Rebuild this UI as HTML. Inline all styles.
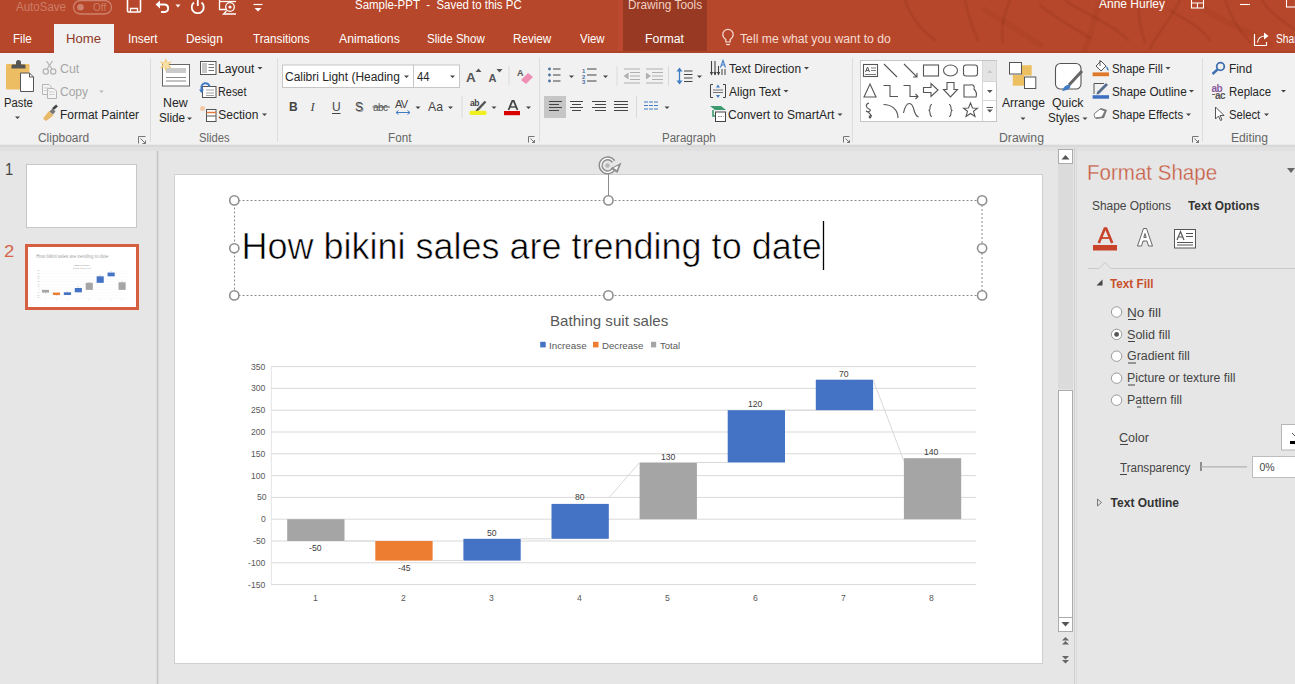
<!DOCTYPE html>
<html><head><meta charset="utf-8">
<style>
*{margin:0;padding:0;box-sizing:border-box}
html,body{width:1295px;height:684px;overflow:hidden;background:#E6E6E6;font-family:"Liberation Sans",sans-serif}
.a{position:absolute}
.t{position:absolute;white-space:nowrap;line-height:1;transform-origin:0 0}
svg{overflow:visible}
.th .t{color:#8C8C8C !important}
</style></head><body>
<!-- ===== title bar ===== -->
<div class="a" style="left:0;top:0;width:1295px;height:53px;background:#B7472A"></div>
<div class="a" style="left:623px;top:0;width:84px;height:53px;background:#983A23"></div>
<div class="a" style="left:618px;top:0;width:5px;height:53px;background:#BE4931"></div>
<div class="a" style="left:0;top:51px;width:1295px;height:2px;background:#AE4328"></div>
<svg class="a" style="left:0;top:0" width="1295" height="53">
<g fill="none" stroke="rgba(110,35,15,0.13)" stroke-width="3" stroke-linecap="round">
  <path d="M905 0 C910 15 918 28 935 40"/>
  <path d="M965 0 C968 14 972 28 978 40"/>
  <path d="M1010 0 C1004 14 1000 28 1003 42"/>
  <path d="M1040 5 C1055 18 1075 28 1090 38"/>
  <path d="M1065 0 C1080 12 1110 22 1128 40"/>
  <path d="M1140 0 C1137 14 1140 28 1145 42"/>
  <path d="M1170 10 C1185 20 1200 26 1210 40"/>
  <path d="M1225 0 C1232 18 1238 30 1250 42"/>
  <path d="M1262 0 C1270 14 1285 22 1295 30"/>
  <path d="M1180 0 C1170 20 1160 30 1150 48"/>
</g>
<g fill="none" stroke="rgba(110,35,15,0.08)" stroke-width="6" stroke-linecap="round">
  <path d="M985 10 C1000 20 1020 30 1040 45"/>
  <path d="M1100 0 C1095 20 1090 35 1085 50"/>
  <path d="M1200 5 C1215 20 1240 25 1270 45"/>
</g>
</svg>

<div class="a" style="left:54px;top:24px;width:60px;height:31px;background:#F1F1F1"></div>
<!-- ===== ribbon ===== -->
<div class="a" style="left:0;top:53px;width:1295px;height:92px;background:#F1F1F1"></div>
<div class="a" style="left:54px;top:51px;width:60px;height:4px;background:#F1F1F1"></div>
<div class="a" style="left:0;top:144px;width:1295px;height:1px;background:#E9E9E9"></div>
<div class="a" style="left:0;top:145px;width:1295px;height:2px;background:#D8D8D8"></div>
<div class="a" style="left:0;top:147px;width:1295px;height:4px;background:#E0E0E0"></div>
<!-- group separators -->
<div class="a" style="left:150px;top:58px;width:1px;height:84px;background:#DCDCDC"></div>
<div class="a" style="left:277px;top:58px;width:1px;height:84px;background:#DCDCDC"></div>
<div class="a" style="left:539px;top:58px;width:1px;height:84px;background:#DCDCDC"></div>
<div class="a" style="left:852px;top:58px;width:1px;height:84px;background:#DCDCDC"></div>
<div class="a" style="left:1202px;top:58px;width:1px;height:84px;background:#DCDCDC"></div>

<!-- ===== left thumbnails panel ===== -->
<div class="a" style="left:156px;top:151px;width:1px;height:533px;background:#DCDCDC"></div>
<div class="a" style="left:157px;top:151px;width:1px;height:533px;background:#C4C4C4"></div>
<div class="a" style="left:158px;top:151px;width:1px;height:533px;background:#DADADA"></div>
<div class="a" style="left:26px;top:164px;width:111px;height:64px;background:#fff;border:1px solid #C6C6C6"></div>
<div class="a" style="left:25px;top:244px;width:114px;height:66px;background:#fff;border:3px solid #D65F40"></div>
<div class="a th" style="left:28px;top:247px;width:108px;height:60px;overflow:hidden">
  <div class="a" style="left:0;top:0;width:1295px;height:684px;transform-origin:0 0;transform:scale(0.1242) translate(-175px,-174px)">
  <svg class="a" style="left:0;top:0" width="1295" height="684" viewBox="0 0 1295 684">
<line x1="271" y1="366.6" x2="976" y2="366.6" stroke="#D9D9D9" stroke-width="1"/>
<line x1="271" y1="388.4" x2="976" y2="388.4" stroke="#D9D9D9" stroke-width="1"/>
<line x1="271" y1="410.2" x2="976" y2="410.2" stroke="#D9D9D9" stroke-width="1"/>
<line x1="271" y1="432.0" x2="976" y2="432.0" stroke="#D9D9D9" stroke-width="1"/>
<line x1="271" y1="453.8" x2="976" y2="453.8" stroke="#D9D9D9" stroke-width="1"/>
<line x1="271" y1="475.6" x2="976" y2="475.6" stroke="#D9D9D9" stroke-width="1"/>
<line x1="271" y1="497.4" x2="976" y2="497.4" stroke="#D9D9D9" stroke-width="1"/>
<line x1="271" y1="519.2" x2="976" y2="519.2" stroke="#D9D9D9" stroke-width="1"/>
<line x1="271" y1="541.0" x2="976" y2="541.0" stroke="#D9D9D9" stroke-width="1"/>
<line x1="271" y1="562.8" x2="976" y2="562.8" stroke="#D9D9D9" stroke-width="1"/>
<line x1="271" y1="584.6" x2="976" y2="584.6" stroke="#D9D9D9" stroke-width="1"/>
<line x1="271.3" y1="366.6" x2="271.3" y2="584.6" stroke="#E4E4E4" stroke-width="1"/>
<rect x="287.2" y="519.2" width="57.3" height="21.8" fill="#A5A5A5"/>
<rect x="375.3" y="541.0" width="57.3" height="19.6" fill="#ED7D31"/>
<rect x="463.4" y="538.8" width="57.3" height="21.8" fill="#4472C4"/>
<rect x="551.5" y="503.9" width="57.3" height="34.9" fill="#4472C4"/>
<rect x="639.6" y="462.5" width="57.3" height="56.7" fill="#A5A5A5"/>
<rect x="727.7" y="410.2" width="57.3" height="52.3" fill="#4472C4"/>
<rect x="815.8" y="379.7" width="57.3" height="30.5" fill="#4472C4"/>
<rect x="903.9" y="458.2" width="57.3" height="61.0" fill="#A5A5A5"/>
<line x1="344.5" y1="541.0" x2="375.3" y2="541.0" stroke="#D9D9D9" stroke-width="1"/>
<line x1="432.6" y1="560.6" x2="463.4" y2="560.6" stroke="#D9D9D9" stroke-width="1"/>
<line x1="520.7" y1="538.8" x2="551.5" y2="538.8" stroke="#D9D9D9" stroke-width="1"/>
<line x1="608.8" y1="497.9" x2="639.6" y2="462.5" stroke="#D9D9D9" stroke-width="1"/>
<line x1="696.9" y1="462.5" x2="727.7" y2="462.5" stroke="#D9D9D9" stroke-width="1"/>
<line x1="785.0" y1="410.2" x2="815.8" y2="410.2" stroke="#D9D9D9" stroke-width="1"/>
<line x1="873.1" y1="379.7" x2="903.9" y2="461.2" stroke="#D9D9D9" stroke-width="1"/>
<rect x="540.2" y="341.8" width="5.5" height="5.6" fill="#4472C4"/>
<rect x="593" y="341.8" width="5.5" height="5.6" fill="#ED7D31"/>
<rect x="651" y="341.8" width="5.2" height="5.6" fill="#A5A5A5"/>
</svg>
<div class="t" style="left:241.40px;top:228.60px;font-size:36px;color:#000;font-weight:normal;-webkit-text-stroke:0.6px #fff;">How bikini sales are trending to date</div>
<div class="t" style="left:549.59px;top:313.15px;font-size:15px;color:#595959;font-weight:normal;transform:scaleX(1.0060);">Bathing suit sales</div>
<div class="t" style="left:548.87px;top:340.73px;font-size:9.5px;color:#595959;font-weight:normal;transform:scaleX(1.0314);">Increase</div>
<div class="t" style="left:602.38px;top:340.73px;font-size:9.5px;color:#595959;font-weight:normal;transform:scaleX(1.0154);">Decrease</div>
<div class="t" style="left:660.40px;top:340.73px;font-size:9.5px;color:#595959;font-weight:normal;transform:scaleX(1.0050);">Total</div>
<div class="t" style="left:251.10px;top:361.64px;font-size:9.6px;color:#595959;font-weight:normal;transform:scaleX(0.9000);">350</div>
<div class="t" style="left:251.10px;top:383.44px;font-size:9.6px;color:#595959;font-weight:normal;transform:scaleX(0.9000);">300</div>
<div class="t" style="left:251.10px;top:405.24px;font-size:9.6px;color:#595959;font-weight:normal;transform:scaleX(0.9000);">250</div>
<div class="t" style="left:251.10px;top:427.04px;font-size:9.6px;color:#595959;font-weight:normal;transform:scaleX(0.9000);">200</div>
<div class="t" style="left:251.10px;top:448.84px;font-size:9.6px;color:#595959;font-weight:normal;transform:scaleX(0.9000);">150</div>
<div class="t" style="left:251.10px;top:470.64px;font-size:9.6px;color:#595959;font-weight:normal;transform:scaleX(0.9000);">100</div>
<div class="t" style="left:256.50px;top:492.44px;font-size:9.6px;color:#595959;font-weight:normal;transform:scaleX(0.9000);">50</div>
<div class="t" style="left:261.00px;top:514.24px;font-size:9.6px;color:#595959;font-weight:normal;transform:scaleX(0.9000);">0</div>
<div class="t" style="left:252.90px;top:536.04px;font-size:9.6px;color:#595959;font-weight:normal;transform:scaleX(0.9000);">-50</div>
<div class="t" style="left:248.40px;top:557.84px;font-size:9.6px;color:#595959;font-weight:normal;transform:scaleX(0.9000);">-100</div>
<div class="t" style="left:248.40px;top:579.64px;font-size:9.6px;color:#595959;font-weight:normal;transform:scaleX(0.9000);">-150</div>
<div class="t" style="left:312.65px;top:592.84px;font-size:9.6px;color:#595959;font-weight:normal;transform:scaleX(0.9000);">1</div>
<div class="t" style="left:400.75px;top:592.84px;font-size:9.6px;color:#595959;font-weight:normal;transform:scaleX(0.9000);">2</div>
<div class="t" style="left:488.85px;top:592.84px;font-size:9.6px;color:#595959;font-weight:normal;transform:scaleX(0.9000);">3</div>
<div class="t" style="left:577.40px;top:592.84px;font-size:9.6px;color:#595959;font-weight:normal;transform:scaleX(0.9000);">4</div>
<div class="t" style="left:665.05px;top:592.84px;font-size:9.6px;color:#595959;font-weight:normal;transform:scaleX(0.9000);">5</div>
<div class="t" style="left:753.15px;top:592.84px;font-size:9.6px;color:#595959;font-weight:normal;transform:scaleX(0.9000);">6</div>
<div class="t" style="left:841.25px;top:592.84px;font-size:9.6px;color:#595959;font-weight:normal;transform:scaleX(0.9000);">7</div>
<div class="t" style="left:929.35px;top:592.84px;font-size:9.6px;color:#595959;font-weight:normal;transform:scaleX(0.9000);">8</div>
<div class="t" style="left:309.25px;top:542.74px;font-size:9.6px;color:#404040;font-weight:normal;transform:scaleX(0.9000);">-50</div>
<div class="t" style="left:397.70px;top:562.74px;font-size:9.6px;color:#404040;font-weight:normal;transform:scaleX(0.9000);">-45</div>
<div class="t" style="left:487.05px;top:527.74px;font-size:9.6px;color:#404040;font-weight:normal;transform:scaleX(0.9000);">50</div>
<div class="t" style="left:575.05px;top:492.34px;font-size:9.6px;color:#404040;font-weight:normal;transform:scaleX(0.9000);">80</div>
<div class="t" style="left:660.65px;top:451.84px;font-size:9.6px;color:#404040;font-weight:normal;transform:scaleX(0.9000);">130</div>
<div class="t" style="left:748.35px;top:398.84px;font-size:9.6px;color:#404040;font-weight:normal;transform:scaleX(0.9000);">120</div>
<div class="t" style="left:839.05px;top:368.84px;font-size:9.6px;color:#404040;font-weight:normal;transform:scaleX(0.9000);">70</div>
<div class="t" style="left:924.35px;top:446.84px;font-size:9.6px;color:#404040;font-weight:normal;transform:scaleX(0.9000);">140</div>
  </div>
</div>

<!-- ===== slide ===== -->
<div class="a" style="left:174px;top:174px;width:869px;height:490px;background:#fff;border:1px solid #CFCFCF"></div>
<svg class="a" style="left:0;top:0" width="1295" height="684" viewBox="0 0 1295 684">
<line x1="271" y1="366.6" x2="976" y2="366.6" stroke="#D9D9D9" stroke-width="1"/>
<line x1="271" y1="388.4" x2="976" y2="388.4" stroke="#D9D9D9" stroke-width="1"/>
<line x1="271" y1="410.2" x2="976" y2="410.2" stroke="#D9D9D9" stroke-width="1"/>
<line x1="271" y1="432.0" x2="976" y2="432.0" stroke="#D9D9D9" stroke-width="1"/>
<line x1="271" y1="453.8" x2="976" y2="453.8" stroke="#D9D9D9" stroke-width="1"/>
<line x1="271" y1="475.6" x2="976" y2="475.6" stroke="#D9D9D9" stroke-width="1"/>
<line x1="271" y1="497.4" x2="976" y2="497.4" stroke="#D9D9D9" stroke-width="1"/>
<line x1="271" y1="519.2" x2="976" y2="519.2" stroke="#D9D9D9" stroke-width="1"/>
<line x1="271" y1="541.0" x2="976" y2="541.0" stroke="#D9D9D9" stroke-width="1"/>
<line x1="271" y1="562.8" x2="976" y2="562.8" stroke="#D9D9D9" stroke-width="1"/>
<line x1="271" y1="584.6" x2="976" y2="584.6" stroke="#D9D9D9" stroke-width="1"/>
<line x1="271.3" y1="366.6" x2="271.3" y2="584.6" stroke="#E4E4E4" stroke-width="1"/>
<rect x="287.2" y="519.2" width="57.3" height="21.8" fill="#A5A5A5"/>
<rect x="375.3" y="541.0" width="57.3" height="19.6" fill="#ED7D31"/>
<rect x="463.4" y="538.8" width="57.3" height="21.8" fill="#4472C4"/>
<rect x="551.5" y="503.9" width="57.3" height="34.9" fill="#4472C4"/>
<rect x="639.6" y="462.5" width="57.3" height="56.7" fill="#A5A5A5"/>
<rect x="727.7" y="410.2" width="57.3" height="52.3" fill="#4472C4"/>
<rect x="815.8" y="379.7" width="57.3" height="30.5" fill="#4472C4"/>
<rect x="903.9" y="458.2" width="57.3" height="61.0" fill="#A5A5A5"/>
<line x1="344.5" y1="541.0" x2="375.3" y2="541.0" stroke="#D9D9D9" stroke-width="1"/>
<line x1="432.6" y1="560.6" x2="463.4" y2="560.6" stroke="#D9D9D9" stroke-width="1"/>
<line x1="520.7" y1="538.8" x2="551.5" y2="538.8" stroke="#D9D9D9" stroke-width="1"/>
<line x1="608.8" y1="497.9" x2="639.6" y2="462.5" stroke="#D9D9D9" stroke-width="1"/>
<line x1="696.9" y1="462.5" x2="727.7" y2="462.5" stroke="#D9D9D9" stroke-width="1"/>
<line x1="785.0" y1="410.2" x2="815.8" y2="410.2" stroke="#D9D9D9" stroke-width="1"/>
<line x1="873.1" y1="379.7" x2="903.9" y2="461.2" stroke="#D9D9D9" stroke-width="1"/>
<rect x="540.2" y="341.8" width="5.5" height="5.6" fill="#4472C4"/>
<rect x="593" y="341.8" width="5.5" height="5.6" fill="#ED7D31"/>
<rect x="651" y="341.8" width="5.2" height="5.6" fill="#A5A5A5"/>
</svg>
<div class="t" style="left:241.40px;top:228.60px;font-size:36px;color:#000;font-weight:normal;-webkit-text-stroke:0.6px #fff;">How bikini sales are trending to date</div>
<div class="t" style="left:549.59px;top:313.15px;font-size:15px;color:#595959;font-weight:normal;transform:scaleX(1.0060);">Bathing suit sales</div>
<div class="t" style="left:548.87px;top:340.73px;font-size:9.5px;color:#595959;font-weight:normal;transform:scaleX(1.0314);">Increase</div>
<div class="t" style="left:602.38px;top:340.73px;font-size:9.5px;color:#595959;font-weight:normal;transform:scaleX(1.0154);">Decrease</div>
<div class="t" style="left:660.40px;top:340.73px;font-size:9.5px;color:#595959;font-weight:normal;transform:scaleX(1.0050);">Total</div>
<div class="t" style="left:251.10px;top:361.64px;font-size:9.6px;color:#595959;font-weight:normal;transform:scaleX(0.9000);">350</div>
<div class="t" style="left:251.10px;top:383.44px;font-size:9.6px;color:#595959;font-weight:normal;transform:scaleX(0.9000);">300</div>
<div class="t" style="left:251.10px;top:405.24px;font-size:9.6px;color:#595959;font-weight:normal;transform:scaleX(0.9000);">250</div>
<div class="t" style="left:251.10px;top:427.04px;font-size:9.6px;color:#595959;font-weight:normal;transform:scaleX(0.9000);">200</div>
<div class="t" style="left:251.10px;top:448.84px;font-size:9.6px;color:#595959;font-weight:normal;transform:scaleX(0.9000);">150</div>
<div class="t" style="left:251.10px;top:470.64px;font-size:9.6px;color:#595959;font-weight:normal;transform:scaleX(0.9000);">100</div>
<div class="t" style="left:256.50px;top:492.44px;font-size:9.6px;color:#595959;font-weight:normal;transform:scaleX(0.9000);">50</div>
<div class="t" style="left:261.00px;top:514.24px;font-size:9.6px;color:#595959;font-weight:normal;transform:scaleX(0.9000);">0</div>
<div class="t" style="left:252.90px;top:536.04px;font-size:9.6px;color:#595959;font-weight:normal;transform:scaleX(0.9000);">-50</div>
<div class="t" style="left:248.40px;top:557.84px;font-size:9.6px;color:#595959;font-weight:normal;transform:scaleX(0.9000);">-100</div>
<div class="t" style="left:248.40px;top:579.64px;font-size:9.6px;color:#595959;font-weight:normal;transform:scaleX(0.9000);">-150</div>
<div class="t" style="left:312.65px;top:592.84px;font-size:9.6px;color:#595959;font-weight:normal;transform:scaleX(0.9000);">1</div>
<div class="t" style="left:400.75px;top:592.84px;font-size:9.6px;color:#595959;font-weight:normal;transform:scaleX(0.9000);">2</div>
<div class="t" style="left:488.85px;top:592.84px;font-size:9.6px;color:#595959;font-weight:normal;transform:scaleX(0.9000);">3</div>
<div class="t" style="left:577.40px;top:592.84px;font-size:9.6px;color:#595959;font-weight:normal;transform:scaleX(0.9000);">4</div>
<div class="t" style="left:665.05px;top:592.84px;font-size:9.6px;color:#595959;font-weight:normal;transform:scaleX(0.9000);">5</div>
<div class="t" style="left:753.15px;top:592.84px;font-size:9.6px;color:#595959;font-weight:normal;transform:scaleX(0.9000);">6</div>
<div class="t" style="left:841.25px;top:592.84px;font-size:9.6px;color:#595959;font-weight:normal;transform:scaleX(0.9000);">7</div>
<div class="t" style="left:929.35px;top:592.84px;font-size:9.6px;color:#595959;font-weight:normal;transform:scaleX(0.9000);">8</div>
<div class="t" style="left:309.25px;top:542.74px;font-size:9.6px;color:#404040;font-weight:normal;transform:scaleX(0.9000);">-50</div>
<div class="t" style="left:397.70px;top:562.74px;font-size:9.6px;color:#404040;font-weight:normal;transform:scaleX(0.9000);">-45</div>
<div class="t" style="left:487.05px;top:527.74px;font-size:9.6px;color:#404040;font-weight:normal;transform:scaleX(0.9000);">50</div>
<div class="t" style="left:575.05px;top:492.34px;font-size:9.6px;color:#404040;font-weight:normal;transform:scaleX(0.9000);">80</div>
<div class="t" style="left:660.65px;top:451.84px;font-size:9.6px;color:#404040;font-weight:normal;transform:scaleX(0.9000);">130</div>
<div class="t" style="left:748.35px;top:398.84px;font-size:9.6px;color:#404040;font-weight:normal;transform:scaleX(0.9000);">120</div>
<div class="t" style="left:839.05px;top:368.84px;font-size:9.6px;color:#404040;font-weight:normal;transform:scaleX(0.9000);">70</div>
<div class="t" style="left:924.35px;top:446.84px;font-size:9.6px;color:#404040;font-weight:normal;transform:scaleX(0.9000);">140</div>
<!-- selection box -->
<svg class="a" style="left:0;top:0" width="1295" height="684">
  <rect x="234.5" y="200.5" width="747.5" height="95" fill="none" stroke="#8C8C8C" stroke-width="1" stroke-dasharray="2,2"/>
  <line x1="608.5" y1="174" x2="608.5" y2="195.5" stroke="#8C8C8C" stroke-width="1"/>
  <g fill="#fff" stroke="#8E8E8E" stroke-width="1.6">
    <circle cx="234.3" cy="200.4" r="4.6"/><circle cx="608.4" cy="200.4" r="4.6"/><circle cx="982.1" cy="200.4" r="4.6"/>
    <circle cx="234.3" cy="248.3" r="4.6"/><circle cx="982.1" cy="248.3" r="4.6"/>
    <circle cx="234.3" cy="295.4" r="4.6"/><circle cx="608.4" cy="295.4" r="4.6"/><circle cx="982.1" cy="295.4" r="4.6"/>
  </g>
  <g fill="none">
    <path d="M613.5 161.5 A7 7 0 1 0 614.3 167.5" stroke="#8E8E8E" stroke-width="4.2"/>
    <path d="M613.5 161.5 A7 7 0 1 0 614.3 167.5" stroke="#fff" stroke-width="1.3"/>
  </g>
  <circle cx="607.5" cy="165.5" r="2.2" fill="#B5B5B5"/>
  <path d="M610.5 168.5 L621.5 162.5 L617.5 173Z" fill="#8E8E8E"/>
  <path d="M613.5 168 L618.5 165.5 L616.8 170Z" fill="#fff"/>
  <line x1="823.5" y1="221" x2="823.5" y2="270" stroke="#000" stroke-width="1.3"/>
</svg>

<!-- ===== scrollbar ===== -->
<div class="a" style="left:1058px;top:149px;width:15px;height:15px;background:#fff;border:1px solid #ABABAB"></div>
<div class="a" style="left:1058px;top:164px;width:15px;height:225px;background:#DBDBDB"></div>
<div class="a" style="left:1058px;top:390px;width:15px;height:228px;background:#fff;border:1px solid #ABABAB"></div>
<div class="a" style="left:1058px;top:617px;width:15px;height:15px;background:#fff;border:1px solid #ABABAB"></div>
<svg class="a" style="left:0;top:0" width="1295" height="684">
  <path d="M1061.5 159.5 L1065.5 155 L1069.5 159.5Z" fill="#555"/>
  <path d="M1061.5 622 L1065.5 626.5 L1069.5 622Z" fill="#555"/>
  <path d="M1062 640.5 L1065.5 637 L1069 640.5Z M1062 644.5 L1065.5 641 L1069 644.5Z" fill="#666"/>
  <path d="M1062 656 L1065.5 659.5 L1069 656Z M1062 660 L1065.5 663.5 L1069 660Z" fill="#666"/>
</svg>
<div class="a" style="left:1074px;top:148px;width:1px;height:536px;background:#CFCFCF"></div>
<div class="a" style="left:1076px;top:148px;width:1px;height:536px;background:#DADADA"></div>

<!-- ===== format pane ===== -->
<svg class="a" style="left:0;top:0" width="1295" height="684">
  <path d="M1287 168 L1295 168 L1291 173Z" fill="#666"/>
  <!-- fill A -->
  <path d="M1098.8 243 L1104.8 228.5 L1106.2 228.5 L1112.2 243" fill="none" stroke="#C8432A" stroke-width="2.6"/>
  <line x1="1101" y1="238" x2="1110" y2="238" stroke="#C8432A" stroke-width="1.8"/>
  <rect x="1093" y="245" width="24" height="5.5" fill="#C8432A"/>
  <!-- outline A -->
  <path d="M1137.5 246 L1143.5 228.5 L1146.5 228.5 L1152.5 246 L1148.5 246 L1147 241 L1143 241 L1141.5 246Z M1143.8 237.5 L1146.2 237.5 L1145 233.5Z" fill="#fff" stroke="#666" stroke-width="1"/>
  <!-- textbox icon -->
  <rect x="1174.5" y="229.5" width="21" height="18.5" fill="#fff" stroke="#555" stroke-width="1"/>
  <path d="M1177 240 L1180.5 231.5 L1184 240 M1178.3 237 L1182.7 237" fill="none" stroke="#555" stroke-width="1.2"/>
  <path d="M1186 233.5 H1193 M1186 236.5 H1193 M1177 242.5 H1193 M1177 245 H1193" stroke="#555" stroke-width="1"/>
  <!-- separator with notch -->
  <path d="M1088 268.5 H1099 L1105 262.5 L1111 268.5 H1295" fill="none" stroke="#C9C9C9" stroke-width="1"/>
  <!-- text fill triangle -->
  <path d="M1096.5 285.5 L1102.5 285.5 L1102.5 279.5Z" fill="#444"/>
  <!-- radios -->
  <g fill="#fff" stroke="#9A9A9A" stroke-width="1">
    <circle cx="1116.6" cy="312" r="5.2"/><circle cx="1116.6" cy="334.4" r="5.2"/><circle cx="1116.6" cy="356.2" r="5.2"/><circle cx="1116.6" cy="378.2" r="5.2"/><circle cx="1116.6" cy="400.2" r="5.2"/>
  </g>
  <circle cx="1116.6" cy="334.4" r="2.4" fill="#555"/>
  <!-- access key underlines -->
  <g stroke="#444" stroke-width="1">
    <line x1="1128" y1="319.5" x2="1136" y2="319.5"/>
    <line x1="1128" y1="341.5" x2="1135" y2="341.5"/>
    <line x1="1128" y1="363" x2="1136" y2="363"/>
    <line x1="1128" y1="385" x2="1135" y2="385"/>
    <line x1="1137" y1="407" x2="1141" y2="407"/>
    <line x1="1120" y1="444.5" x2="1128" y2="444.5"/>
    <line x1="1120" y1="474.5" x2="1127" y2="474.5"/>
  </g>
  <!-- color button -->
  <rect x="1281.5" y="424.5" width="20" height="25.5" fill="#fff" stroke="#B5B5B5"/>
  <rect x="1290" y="441" width="6" height="3" fill="#000"/>
  <path d="M1292 433 L1295 436" stroke="#555"/>
  <!-- slider -->
  <line x1="1201" y1="462" x2="1201" y2="471" stroke="#666" stroke-width="1.4"/>
  <line x1="1201" y1="466.8" x2="1247" y2="466.8" stroke="#B0B0B0" stroke-width="1.2"/>
  <rect x="1252.5" y="456.5" width="50" height="21" fill="#fff" stroke="#BDBDBD"/>
  <!-- outline triangle -->
  <path d="M1097.5 499 L1101.5 502.5 L1097.5 506Z" fill="none" stroke="#777" stroke-width="1"/>
</svg>

<!-- ===== icons ===== -->
<svg class="a" style="left:0;top:0" width="1295" height="684" viewBox="0 0 1295 684">
<!-- quick access toolbar -->
<g fill="none" stroke="#fff" stroke-width="1.6">
  <rect x="127.5" y="-2" width="13" height="14" rx="1"/>
  <path d="M130.5 12 V8.5 H137.5 V12" stroke-width="1.3"/>
</g>
<path d="M158 4.5 H165 A3.8 3.8 0 0 1 165 12 H161" fill="none" stroke="#fff" stroke-width="1.8"/>
<path d="M155.5 4.5 L160 0.5 L160 8.5Z" fill="#fff"/>
<path d="M175.5 4.5 H180.5 L178 7.5Z" fill="#fff"/>
<path d="M194 2.5 A6 6 0 1 0 201.5 2.5" fill="none" stroke="#fff" stroke-width="1.8"/>
<path d="M197.8 -1 V6" stroke="#fff" stroke-width="1.8"/>
<g fill="none" stroke="#fff" stroke-width="1.3">
  <path d="M219.5 -1 V9.5 H227"/><path d="M219.5 1.5 H236"/>
  <circle cx="230" cy="7" r="4.3"/><path d="M226.5 11 L223.5 14 H236"/>
</g>
<circle cx="230" cy="7" r="1.6" fill="#fff"/>
<path d="M253.5 4.5 H262.5" stroke="#fff" stroke-width="1.2"/>
<path d="M254.5 8 H261.5 L258 11.5Z" fill="#fff"/>
<!-- autosave pill -->
<rect x="73.5" y="0.5" width="38" height="13.5" rx="6.7" fill="none" stroke="rgba(255,255,255,0.32)" stroke-width="1.3"/>
<circle cx="80.5" cy="7.2" r="3.3" fill="rgba(255,255,255,0.32)"/>
<!-- window controls -->
<g fill="none" stroke="#fff" stroke-width="1.1">
  <rect x="1191.5" y="-1.5" width="12" height="9.5"/><path d="M1191.5 3 H1203.5 M1197.5 3 V8"/>
  <path d="M1240 4.5 H1250"/>
  <rect x="1286.5" y="-1" width="9" height="8"/>
</g>
<!-- share icon -->
<g fill="none" stroke="#fff" stroke-width="1.2">
  <path d="M1254.5 34 V45.5 H1266.5 V42"/>
  <path d="M1257.5 42.5 C1258 38 1261 36 1265.5 36"/>
</g>
<path d="M1264 32.5 L1268.5 36 L1264 39.5Z" fill="#fff"/>
<!-- lightbulb -->
<g fill="none" stroke="#F7DCD3" stroke-width="1.2">
  <path d="M725.8 39.5 C723.5 38 722.8 36.2 722.8 34.5 A5.2 5.2 0 0 1 733.2 34.5 C733.2 36.2 732.5 38 730.2 39.5 V42 H725.8Z"/>
  <path d="M726 44.5 H730"/>
</g>

<!-- ===== clipboard group ===== -->
<rect x="6" y="64" width="23.5" height="25.5" rx="1.2" fill="#EDBD63"/>
<path d="M11.5 68.5 V66 C11.5 65 12 64.5 13 64.5 H16 V62.5 A1.5 1.5 0 0 1 21 62.5 V64.5 H24 C25 64.5 25.5 65 25.5 66 V68.5Z" fill="#555"/>
<path d="M20.5 73 H29.5 L33.5 77 V91.5 H20.5Z" fill="#fff" stroke="#555" stroke-width="1"/>
<path d="M29.5 73 V77 H33.5" fill="none" stroke="#555" stroke-width="1"/>
<path d="M15 116.5 H20 L17.5 119Z" fill="#444"/>
<!-- cut -->
<g fill="none" stroke="#B5B5B5" stroke-width="1.3">
  <circle cx="45.8" cy="71.5" r="2.6"/><circle cx="53.2" cy="71.5" r="2.6"/>
  <path d="M47 69 L52.5 61 M52 69 L46.5 61"/>
</g>
<!-- copy -->
<g fill="#F4F4F4" stroke="#B5B5B5" stroke-width="1">
  <path d="M42.5 84.5 H49 L51 86.5 V94.5 H42.5Z"/>
  <path d="M47.5 88.5 H54 L56.5 91 V98.5 H47.5Z"/>
</g>
<path d="M44 88 H49 M44 90.5 H49 M49 92 H54.5 M49 94.5 H54.5" stroke="#C5C5C5" stroke-width="0.8"/>
<path d="M99 90.5 H104 L101.5 93Z" fill="#BBB"/>
<!-- format painter -->
<path d="M43 118.5 L49 111 L53.5 115.5 L46 121Z" fill="#E8B968"/>
<path d="M49.5 111.5 L52.5 108.5 L55.5 111.5 L53 114.5Z" fill="#777"/>
<path d="M53 109 L57 105.5" stroke="#444" stroke-width="2.6"/>

<!-- ===== slides group ===== -->
<rect x="162.5" y="64.5" width="27" height="21.5" fill="#fff" stroke="#666" stroke-width="1"/>
<rect x="166" y="68" width="20" height="5" fill="#CACACA"/>
<path d="M166 77.5 H186 M166 81 H186" stroke="#888" stroke-width="1"/>
<g transform="translate(165.8,64.8)">
  <path d="M0 -7 L1.6 -2.4 L6.3 -3.6 L3 0 L6.3 3.6 L1.6 2.4 L0 7 L-1.6 2.4 L-6.3 3.6 L-3 0 L-6.3 -3.6 L-1.6 -2.4Z" fill="#F3CC7C"/>
  <circle r="2.8" fill="#F8DFA5"/>
</g>
<path d="M187 117.5 H192 L189.5 120Z" fill="#444"/>
<!-- layout -->
<rect x="200.5" y="61.5" width="15.5" height="13" fill="#fff" stroke="#555" stroke-width="1"/>
<rect x="202" y="63" width="5" height="10" fill="#C8C8C8"/>
<path d="M208.5 64.5 H214 M208.5 67.5 H214 M208.5 70.5 H214" stroke="#777" stroke-width="1"/>
<path d="M257.5 67 H262.5 L260 69.5Z" fill="#444"/>
<!-- reset -->
<rect x="202.5" y="86.5" width="13.5" height="11" fill="#fff" stroke="#555" stroke-width="1"/>
<path d="M206 90 H214 M206 93 H214 M206 95.5 H214" stroke="#999" stroke-width="0.9"/>
<path d="M201.5 92 V88 A4 4 0 0 1 209.5 86.5" fill="none" stroke="#3F7CC4" stroke-width="2"/>
<path d="M199 89.5 L201.5 93 L204 89.5Z" fill="#3F7CC4"/>
<!-- section -->
<circle cx="202.5" cy="108.5" r="2.5" fill="#F2C9A8"/>
<rect x="206.5" y="109.5" width="9.5" height="12" fill="#fff" stroke="#555" stroke-width="1"/>
<path d="M206.5 112.5 H216" stroke="#E07A3D" stroke-width="1.5"/>
<path d="M206.5 116 H216" stroke="#555" stroke-width="1"/>
<path d="M262 113.5 H267 L264.5 116Z" fill="#444"/>

<!-- ===== font group ===== -->
<rect x="282.5" y="65" width="131" height="22.5" fill="#fff" stroke="#C6C6C6" stroke-width="1"/>
<rect x="413.5" y="65" width="46" height="22.5" fill="#fff" stroke="#C6C6C6" stroke-width="1"/>
<path d="M404 75.5 H409 L406.5 78Z M450 75.5 H455 L452.5 78Z" fill="#444"/>
<!-- grow/shrink -->
<text x="466" y="81.5" font-family="Liberation Sans" font-size="13.5" font-weight="bold" fill="#555">A</text>
<path d="M475.5 72 L478.5 68.5 L481.5 72Z" fill="#555"/>
<text x="488.5" y="81.5" font-family="Liberation Sans" font-size="11" font-weight="bold" fill="#555">A</text>
<path d="M496.5 69 L499.5 72.5 L502.5 69Z" fill="#555"/>
<path d="M509 66 V85" stroke="#DADADA" stroke-width="1"/>
<!-- clear formatting -->
<text x="517" y="75.5" font-family="Liberation Sans" font-size="9" font-weight="bold" fill="#555">A</text>
<path d="M521 80 L528 73 L533 77 L526 84Z" fill="#EE8FB3"/>
<!-- row 2: B I U S abc AV -->
<text x="289" y="110.7" font-family="Liberation Sans" font-size="12" font-weight="bold" fill="#444">B</text>
<text x="310.5" y="110.7" font-family="Liberation Serif" font-size="12.5" font-style="italic" fill="#444">I</text>
<text x="332" y="110.7" font-family="Liberation Sans" font-size="12" fill="#444">U</text>
<path d="M332 113.5 H340.5" stroke="#444" stroke-width="1"/>
<text x="356" y="111.5" font-family="Liberation Sans" font-size="12" fill="#999">S</text>
<text x="355" y="110.7" font-family="Liberation Sans" font-size="12" fill="#444">S</text>
<text x="373" y="110.7" font-family="Liberation Sans" font-size="10" fill="#555" letter-spacing="-0.6">abc</text>
<path d="M372.5 107 H390" stroke="#555" stroke-width="1"/>
<text x="395" y="108" font-family="Liberation Sans" font-size="11" fill="#444" letter-spacing="-0.8">AV</text>
<path d="M396 112.5 H410" stroke="#3F7CC4" stroke-width="1"/>
<path d="M398.5 110.5 L396 112.5 L398.5 114.5 M407.5 110.5 L410 112.5 L407.5 114.5" fill="none" stroke="#3F7CC4" stroke-width="1"/>
<path d="M415.5 106.5 H420.5 L418 109Z M448 106.5 H453 L450.5 109Z" fill="#444"/>
<path d="M462 96 V118" stroke="#DADADA" stroke-width="1"/>
<!-- highlight -->
<text x="470" y="105.5" font-family="Liberation Sans" font-size="8.5" font-weight="bold" fill="#444" letter-spacing="-0.5">ab</text>
<path d="M477.5 110 L485.5 101.5" stroke="#555" stroke-width="2.5"/>
<path d="M476 111.5 L478 109" stroke="#333" stroke-width="1.5"/>
<rect x="469.5" y="110.8" width="17" height="4.2" rx="1.5" fill="#F0F020"/>
<path d="M491.5 106.5 H496.5 L494 109Z" fill="#444"/>
<!-- font color -->
<path d="M508.5 110 L512.3 101 L513.7 101 L517.5 110" fill="none" stroke="#444" stroke-width="1.8"/>
<path d="M510 107 H516" stroke="#444" stroke-width="1.4"/>
<rect x="504" y="111" width="16" height="4.2" fill="#D90000"/>
<path d="M526 106.5 H531 L528.5 109Z" fill="#444"/>
<!-- dialog launchers -->
<g fill="none" stroke="#777" stroke-width="1">
  <path d="M138.5 143.5 V136.5 H145.5"/><path d="M140.5 138.5 L145.5 143.5 M145.5 140.5 V143.5 H142.5"/>
  <path d="M528.5 142.5 V136.5 H534.5"/><path d="M530.5 138.5 L534.5 142.5 M534.5 140 V142.5 H532"/>
  <path d="M843.5 142.5 V136.5 H849.5"/><path d="M845.5 138.5 L849.5 142.5 M849.5 140 V142.5 H847"/>
  <path d="M1192.5 142.5 V136.5 H1198.5"/><path d="M1194.5 138.5 L1198.5 142.5 M1198.5 140 V142.5 H1196"/>
</g>

<!-- ===== paragraph group ===== -->
<g fill="#4A6E9E">
  <circle cx="549.5" cy="69" r="1.4"/><circle cx="549.5" cy="75" r="1.4"/><circle cx="549.5" cy="81" r="1.4"/>
</g>
<path d="M553 69 H560.5 M553 75 H560.5 M553 81 H560.5" stroke="#444" stroke-width="1.1"/>
<path d="M569 75.5 H574 L571.5 78Z" fill="#444"/>
<text x="582" y="72.5" font-family="Liberation Sans" font-size="6" font-weight="bold" fill="#4A6E9E">1</text>
<text x="582" y="78.5" font-family="Liberation Sans" font-size="6" font-weight="bold" fill="#4A6E9E">2</text>
<text x="582" y="84" font-family="Liberation Sans" font-size="6" font-weight="bold" fill="#4A6E9E">3</text>
<path d="M587 69 H596.5 M587 75 H596.5 M587 81 H596.5" stroke="#444" stroke-width="1.1"/>
<path d="M603 75.5 H608 L605.5 78Z" fill="#444"/>
<path d="M617 66 V86 M668.5 66 V86" stroke="#DADADA" stroke-width="1"/>
<!-- indent -->
<g stroke="#B0B0B0" stroke-width="1.1">
  <path d="M624 69 H640 M630 72.5 H640 M630 76 H640 M630 79.5 H640 M624 83 H640"/>
  <path d="M624.5 76 L628 73.5 V78.5Z" fill="#B0B0B0"/>
  <path d="M646 69 H663 M652 72.5 H663 M652 76 H663 M652 79.5 H663 M646 83 H663"/>
  <path d="M650 76 L646.5 73.5 V78.5Z" fill="#B0B0B0"/>
</g>
<!-- line spacing -->
<path d="M679.5 70 V82" stroke="#3F7CC4" stroke-width="1.3"/>
<path d="M676.5 71.5 L679.5 67.5 L682.5 71.5Z M676.5 80.5 L679.5 84.5 L682.5 80.5Z" fill="#3F7CC4"/>
<path d="M684 71 H692.5 M684 74.5 H692.5 M684 78 H692.5 M684 81.5 H692.5" stroke="#444" stroke-width="1.1"/>
<path d="M697 75.5 H702 L699.5 78Z" fill="#444"/>
<!-- align -->
<rect x="544" y="96" width="22" height="22" fill="#C6C6C6"/>
<path d="M549 101.5 H562 M549 104.5 H559 M549 107.5 H562 M549 110.5 H559" stroke="#444" stroke-width="1.1"/>
<path d="M570 101.5 H583 M572 104.5 H581 M570 107.5 H583 M572 110.5 H581" stroke="#444" stroke-width="1.1"/>
<path d="M592 101.5 H606 M595 104.5 H606 M592 107.5 H606 M595 110.5 H606" stroke="#444" stroke-width="1.1"/>
<path d="M614 101.5 H628 M614 104.5 H628 M614 107.5 H628 M614 110.5 H628" stroke="#444" stroke-width="1.1"/>
<path d="M636.5 96 V118" stroke="#DADADA" stroke-width="1"/>
<path d="M644 102 H658 M644 105.5 H658 M644 109 H658" stroke="#3F7CC4" stroke-width="1.1" stroke-dasharray="4,1"/>
<path d="M664.5 106.5 H669.5 L667 109Z" fill="#444"/>
<!-- text direction -->
<path d="M711.5 61 V75 M715 61 V75 M718.5 66 V75" stroke="#444" stroke-width="1.1"/>
<path d="M709.8 72 L711.5 75.5 L713.2 72 M713.3 72 L715 75.5 L716.7 72 M716.8 72 L718.5 75.5 L720.2 72" fill="#444"/>
<path d="M720.5 67.5 L723 60.5 L725.5 67.5 M721.5 65 H724.5" fill="none" stroke="#3F7CC4" stroke-width="1.1"/>
<path d="M722 69 V75 M725 69 V75" stroke="#444" stroke-width="1"/>
<path d="M804 67 H809 L806.5 69.5Z" fill="#444"/>
<!-- align text -->
<path d="M713 84.5 H710.5 V97.5 H713 M723 84.5 H725.5 V97.5 H723" fill="none" stroke="#444" stroke-width="1"/>
<path d="M713 90 H723 M713 92.5 H723" stroke="#666" stroke-width="0.9"/>
<path d="M716 87.5 L718 84.5 L720 87.5Z M716 95 L718 98 L720 95Z" fill="#3F7CC4"/>
<path d="M783.5 90 H788.5 L786 92.5Z" fill="#444"/>
<!-- convert smartart -->
<path d="M710 106 H721 L726 110 H715Z" fill="#3C9A6E"/>
<path d="M713 110 V116 H716" fill="none" stroke="#3C9A6E" stroke-width="1.6"/>
<rect x="715.5" y="112" width="10" height="9.5" fill="#fff" stroke="#444" stroke-width="1"/>
<path d="M718 116.5 H723.5" stroke="#777" stroke-width="0.9" stroke-dasharray="1.5,1"/>
<path d="M837.5 113.5 H842.5 L840 116Z" fill="#444"/>

<!-- ===== shapes gallery ===== -->
<rect x="860.5" y="60.5" width="136" height="61" fill="#fff" stroke="#C6C6C6" stroke-width="1"/>
<rect x="983" y="61" width="13.5" height="20.5" fill="#E4E4E4"/>
<path d="M983 81.5 H996.5 M983 100.5 H996.5 M982.5 61 V121" stroke="#D6D6D6" stroke-width="1"/>
<path d="M987 73 L989.8 70 L992.6 73Z" fill="#C8C8C8"/>
<path d="M987 90 L989.8 93 L992.6 90Z" fill="#555"/>
<path d="M986.5 107.5 H993" stroke="#555" stroke-width="1"/>
<path d="M987 109.5 L989.8 112.5 L992.6 109.5Z" fill="#555"/>
<g fill="none" stroke="#555" stroke-width="1.1">
  <!-- row 1 -->
  <rect x="863.5" y="64.5" width="14" height="12"/>
  <path d="M865.5 72 L867.5 67 L869.5 72 M866.2 70.5 H868.8" stroke-width="1"/>
  <path d="M871 68 H876 M871 70.5 H876 M865 74.5 H876" stroke-width="0.8"/>
  <path d="M884 64 L897 77"/>
  <path d="M904 64 L917 77 M913 77 H917 V73"/>
  <rect x="923.5" y="65" width="15" height="11"/>
  <ellipse cx="950.5" cy="70.5" rx="7" ry="5.5"/>
  <rect x="963.5" y="65" width="14" height="11" rx="2.5"/>
  <!-- row 2 -->
  <path d="M864 97 L870 84 L876 97Z"/>
  <path d="M883.5 85.5 H890 V96.5 H898"/>
  <path d="M903.5 85.5 H910 V96.5 H918 M915.5 94 L918 96.5 L915.5 99"/>
  <path d="M923.5 87.5 H931 V83.5 L938 90 L931 96.5 V92.5 H923.5Z"/>
  <path d="M947 82.5 H954 V89.5 H957.5 L950.5 97 L943.5 89.5 H947Z"/>
  <path d="M964 85 H970 C973 84 975 86 974 89 C976 91 977 94 976 97 H964Z"/>
  <!-- row 3 -->
  <path d="M869 103 C865 104 866 108 869 109 C872 110 869 113 866 111 C869 112 873 116 870 118 C868 117 870 115 872 116"/>
  <path d="M883.5 104.5 C891 104.5 898 109 898 118"/>
  <path d="M903.5 113 C905 106 907 103.5 909.5 103.5 C912 103.5 913 106 914 110 C915 114 916 116 918.5 117"/>
  <path d="M932 104.5 C930 104.5 930 106 930 108.5 C930 110 929.5 110.5 928.5 110.5 C929.5 110.5 930 111 930 112.5 C930 115 930 116.5 932 116.5"/>
  <path d="M949 104.5 C951 104.5 951 106 951 108.5 C951 110 951.5 110.5 952.5 110.5 C951.5 110.5 951 111 951 112.5 C951 115 951 116.5 949 116.5"/>
  <path d="M970.5 103 L972.5 108 L977.5 108.2 L973.5 111.3 L975 116.5 L970.5 113.5 L966 116.5 L967.5 111.3 L963.5 108.2 L968.5 108Z"/>
</g>

<!-- ===== drawing group ===== -->
<rect x="1012.8" y="75" width="11.2" height="10.7" fill="#ECC060"/>
<rect x="1022" y="65.2" width="9.7" height="10.3" fill="#ECC060"/>
<rect x="1009.5" y="62.5" width="12" height="11.5" fill="#fff" stroke="#555" stroke-width="1"/>
<rect x="1024.5" y="77" width="11.3" height="11.5" fill="#fff" stroke="#555" stroke-width="1"/>
<path d="M1020.5 117.5 H1025.5 L1023 120Z" fill="#444"/>
<rect x="1055.5" y="63.5" width="25.5" height="25.5" rx="5" fill="#fff" stroke="#555" stroke-width="1.1"/>
<path d="M1069 85 L1082 71" stroke="#666" stroke-width="3"/>
<path d="M1062 91 C1064 86 1067 84 1070 85 C1071 87 1070 90 1062 91Z" fill="#3F7CC4"/>
<path d="M1082.5 117.5 H1087.5 L1085 120Z" fill="#444"/>
<!-- shape fill -->
<path d="M1096 66 L1101 61 L1106 66 L1101 71Z" fill="#fff" stroke="#555" stroke-width="1"/>
<path d="M1100 60 V66" stroke="#555" stroke-width="1"/>
<path d="M1106 66 C1108 67 1109 69 1108.5 71 C1107 70.5 1106.5 68.5 1106 66Z" fill="#3F7CC4"/>
<rect x="1092.6" y="72.4" width="16.4" height="3.8" fill="#E0782C"/>
<path d="M1165.5 67 H1170.5 L1168 69.5Z" fill="#444"/>
<!-- shape outline -->
<path d="M1094 94 V83.5 H1104" fill="none" stroke="#555" stroke-width="1"/>
<path d="M1097 92 L1106 83 L1108 85 L1099 94 L1096.5 94.5Z" fill="#5A6F8E"/>
<rect x="1092.6" y="95.2" width="16.4" height="3.5" fill="#3F6FC0"/>
<path d="M1189 90 H1194 L1191.5 92.5Z" fill="#444"/>
<!-- shape effects -->
<path d="M1095 113 L1101 108 L1107 110 L1104 118 L1096 119Z" fill="#777"/>
<path d="M1094 114 L1100 109 L1105 111 L1102 117 L1095 118Z" fill="#fff" stroke="#777" stroke-width="0.9"/>
<path d="M1186 113.5 H1191 L1188.5 116Z" fill="#444"/>
<!-- ===== editing group ===== -->
<circle cx="1220.5" cy="66.5" r="3.8" fill="none" stroke="#3F6FB0" stroke-width="1.8"/>
<path d="M1217.5 69.5 L1212.5 74" stroke="#3F6FB0" stroke-width="2.4"/>
<text x="1211.5" y="91.5" font-family="Liberation Sans" font-size="10" font-weight="bold" fill="#8A5A9E" letter-spacing="-0.6">ab</text>
<text x="1215" y="98.5" font-family="Liberation Sans" font-size="10" font-weight="bold" fill="#555" letter-spacing="-0.6">ac</text>
<path d="M1212 94.5 H1215" stroke="#555" stroke-width="0.9"/>
<path d="M1281 90 H1286 L1283.5 92.5Z" fill="#444"/>
<path d="M1215.5 107 V119 L1218.5 116 L1220.5 120.5 L1222 119.8 L1220 115.5 L1224 115.5Z" fill="#fff" stroke="#555" stroke-width="1"/>
<path d="M1264 113.5 H1269 L1266.5 116Z" fill="#444"/>
</svg>


<div class="t" style="left:16.00px;top:1.30px;font-size:12px;color:rgba(255,255,255,0.30);font-weight:normal;transform:scaleX(0.9608);">AutoSave</div>
<div class="t" style="left:93.00px;top:2.50px;font-size:10px;color:rgba(255,255,255,0.30);font-weight:normal;">Off</div>
<div class="t" style="left:355.05px;top:-1.20px;font-size:12px;color:#fff;font-weight:normal;transform:scaleX(0.9538);">Sample-PPT  -  Saved to this PC</div>
<div class="t" style="left:628.01px;top:-1.40px;font-size:12px;color:#F2CFC2;font-weight:normal;transform:scaleX(0.9865);">Drawing Tools</div>
<div class="t" style="left:1099.00px;top:-1.70px;font-size:12px;color:#fff;font-weight:normal;">Anne Hurley</div>
<div class="t" style="left:12.63px;top:33.10px;font-size:12px;color:#fff;font-weight:normal;transform:scaleX(0.9667);">File</div>
<div class="t" style="left:66.11px;top:33.10px;font-size:12px;color:#8E3A24;font-weight:normal;transform:scaleX(1.0933);">Home</div>
<div class="t" style="left:128.01px;top:33.10px;font-size:12px;color:#fff;font-weight:normal;transform:scaleX(0.9862);">Insert</div>
<div class="t" style="left:186.02px;top:33.10px;font-size:12px;color:#fff;font-weight:normal;transform:scaleX(0.9833);">Design</div>
<div class="t" style="left:252.50px;top:33.10px;font-size:12px;color:#fff;font-weight:normal;transform:scaleX(0.9724);">Transitions</div>
<div class="t" style="left:338.50px;top:33.10px;font-size:12px;color:#fff;font-weight:normal;transform:scaleX(1.0254);">Animations</div>
<div class="t" style="left:426.54px;top:33.10px;font-size:12px;color:#fff;font-weight:normal;transform:scaleX(0.9627);">Slide Show</div>
<div class="t" style="left:513.03px;top:33.10px;font-size:12px;color:#fff;font-weight:normal;transform:scaleX(0.9737);">Review</div>
<div class="t" style="left:579.50px;top:33.10px;font-size:12px;color:#fff;font-weight:normal;transform:scaleX(0.9500);">View</div>
<div class="t" style="left:644.97px;top:33.10px;font-size:12px;color:#fff;font-weight:normal;transform:scaleX(1.0270);">Format</div>
<div class="t" style="left:740.00px;top:33.10px;font-size:12px;color:#F7DCD3;font-weight:normal;transform:scaleX(1.0189);">Tell me what you want to do</div>
<div class="t" style="left:1276.00px;top:33.10px;font-size:12px;color:#fff;font-weight:normal;transform:scaleX(0.85)">Share</div>
<div class="t" style="left:59.97px;top:62.50px;font-size:12px;color:#A6A6A6;font-weight:normal;transform:scaleX(1.0278);">Cut</div>
<div class="t" style="left:60.00px;top:85.60px;font-size:12px;color:#A6A6A6;font-weight:normal;">Copy</div>
<div class="t" style="left:60.00px;top:108.70px;font-size:12px;color:#262626;font-weight:normal;transform:scaleX(0.9962);">Format Painter</div>
<div class="t" style="left:3.86px;top:96.50px;font-size:12px;color:#262626;font-weight:normal;transform:scaleX(0.9379);">Paste</div>
<div class="t" style="left:37.71px;top:131.80px;font-size:12px;color:#666666;font-weight:normal;transform:scaleX(0.9940);">Clipboard</div>
<div class="t" style="left:163.27px;top:96.50px;font-size:12px;color:#262626;font-weight:normal;transform:scaleX(1.0304);">New</div>
<div class="t" style="left:158.52px;top:112.10px;font-size:12px;color:#262626;font-weight:normal;transform:scaleX(0.9800);">Slide</div>
<div class="t" style="left:218.29px;top:62.50px;font-size:12px;color:#262626;font-weight:normal;transform:scaleX(1.0114);">Layout</div>
<div class="t" style="left:218.39px;top:85.60px;font-size:12px;color:#262626;font-weight:normal;transform:scaleX(0.9067);">Reset</div>
<div class="t" style="left:218.30px;top:108.70px;font-size:12px;color:#262626;font-weight:normal;">Section</div>
<div class="t" style="left:198.66px;top:131.80px;font-size:12px;color:#666666;font-weight:normal;transform:scaleX(0.9355);">Slides</div>
<div class="t" style="left:284.50px;top:70.60px;font-size:12px;color:#262626;font-weight:normal;transform:scaleX(0.9956);">Calibri Light (Heading</div>
<div class="t" style="left:416.60px;top:70.60px;font-size:12px;color:#262626;font-weight:normal;transform:scaleX(0.9385);">44</div>
<div class="t" style="left:387.83px;top:131.80px;font-size:12px;color:#666666;font-weight:normal;transform:scaleX(0.9739);">Font</div>
<div class="t" style="left:428.00px;top:99.65px;font-size:13px;color:#444;font-weight:normal;transform:scaleX(0.9375);">Aa</div>
<div class="t" style="left:661.54px;top:131.80px;font-size:12px;color:#666666;font-weight:normal;transform:scaleX(0.9593);">Paragraph</div>
<div class="t" style="left:729.20px;top:62.50px;font-size:12px;color:#262626;font-weight:normal;transform:scaleX(0.9917);">Text Direction</div>
<div class="t" style="left:729.20px;top:85.60px;font-size:12px;color:#262626;font-weight:normal;transform:scaleX(0.9962);">Align Text</div>
<div class="t" style="left:728.20px;top:108.70px;font-size:12px;color:#262626;font-weight:normal;transform:scaleX(1.0038);">Convert to SmartArt</div>
<div class="t" style="left:1002.30px;top:96.70px;font-size:12px;color:#262626;font-weight:normal;transform:scaleX(1.0048);">Arrange</div>
<div class="t" style="left:1052.37px;top:96.70px;font-size:12px;color:#262626;font-weight:normal;transform:scaleX(1.0267);">Quick</div>
<div class="t" style="left:1048.33px;top:112.10px;font-size:12px;color:#262626;font-weight:normal;transform:scaleX(0.9677);">Styles</div>
<div class="t" style="left:1111.65px;top:62.50px;font-size:12px;color:#262626;font-weight:normal;transform:scaleX(0.9500);">Shape Fill</div>
<div class="t" style="left:1111.62px;top:85.60px;font-size:12px;color:#262626;font-weight:normal;transform:scaleX(0.9827);">Shape Outline</div>
<div class="t" style="left:1111.65px;top:108.70px;font-size:12px;color:#262626;font-weight:normal;transform:scaleX(0.9548);">Shape Effects</div>
<div class="t" style="left:998.88px;top:131.80px;font-size:12px;color:#666666;font-weight:normal;transform:scaleX(1.0214);">Drawing</div>
<div class="t" style="left:1229.41px;top:62.50px;font-size:12px;color:#262626;font-weight:normal;transform:scaleX(0.9864);">Find</div>
<div class="t" style="left:1229.45px;top:85.60px;font-size:12px;color:#262626;font-weight:normal;transform:scaleX(0.9548);">Replace</div>
<div class="t" style="left:1229.47px;top:108.70px;font-size:12px;color:#262626;font-weight:normal;transform:scaleX(0.9344);">Select</div>
<div class="t" style="left:1230.69px;top:131.80px;font-size:12px;color:#666666;font-weight:normal;transform:scaleX(1.0114);">Editing</div>
<div class="t" style="left:4.69px;top:162.30px;font-size:16px;color:#444;font-weight:normal;transform:scaleX(0.9143);">1</div>
<div class="t" style="left:3.64px;top:243.50px;font-size:16px;color:#D4654A;font-weight:normal;transform:scaleX(1.1571);">2</div>
<div class="t" style="left:1086.69px;top:162.72px;font-size:21.5px;color:#C85C42;font-weight:normal;transform:scaleX(0.9549);-webkit-text-stroke:0.3px #E6E6E6;">Format Shape</div>
<div class="t" style="left:1091.51px;top:200.10px;font-size:12px;color:#444;font-weight:normal;transform:scaleX(0.9936);">Shape Options</div>
<div class="t" style="left:1188.20px;top:200.10px;font-size:12px;color:#333;font-weight:bold;transform:scaleX(0.9875);">Text Options</div>
<div class="t" style="left:1110.30px;top:278.00px;font-size:12px;color:#C8502D;font-weight:bold;transform:scaleX(0.9773);">Text Fill</div>
<div class="t" style="left:1126.77px;top:306.90px;font-size:12px;color:#444444;font-weight:normal;transform:scaleX(1.1321);">No fill</div>
<div class="t" style="left:1126.85px;top:328.80px;font-size:12px;color:#444444;font-weight:normal;transform:scaleX(1.0475);">Solid fill</div>
<div class="t" style="left:1126.87px;top:350.40px;font-size:12px;color:#444444;font-weight:normal;transform:scaleX(1.0322);">Gradient fill</div>
<div class="t" style="left:1126.88px;top:372.30px;font-size:12px;color:#444444;font-weight:normal;transform:scaleX(1.0221);">Picture or texture fill</div>
<div class="t" style="left:1126.87px;top:394.20px;font-size:12px;color:#444444;font-weight:normal;transform:scaleX(1.0308);">Pattern fill</div>
<div class="t" style="left:1119.05px;top:432.00px;font-size:12px;color:#444444;font-weight:normal;transform:scaleX(1.0464);">Color</div>
<div class="t" style="left:1120.10px;top:462.00px;font-size:12px;color:#444444;font-weight:normal;transform:scaleX(0.9644);">Transparency</div>
<div class="t" style="left:1259.40px;top:462.07px;font-size:10.5px;color:#444444;font-weight:normal;">0%</div>
<div class="t" style="left:1110.60px;top:496.90px;font-size:12px;color:#333;font-weight:bold;">Text Outline</div>
</body></html>
